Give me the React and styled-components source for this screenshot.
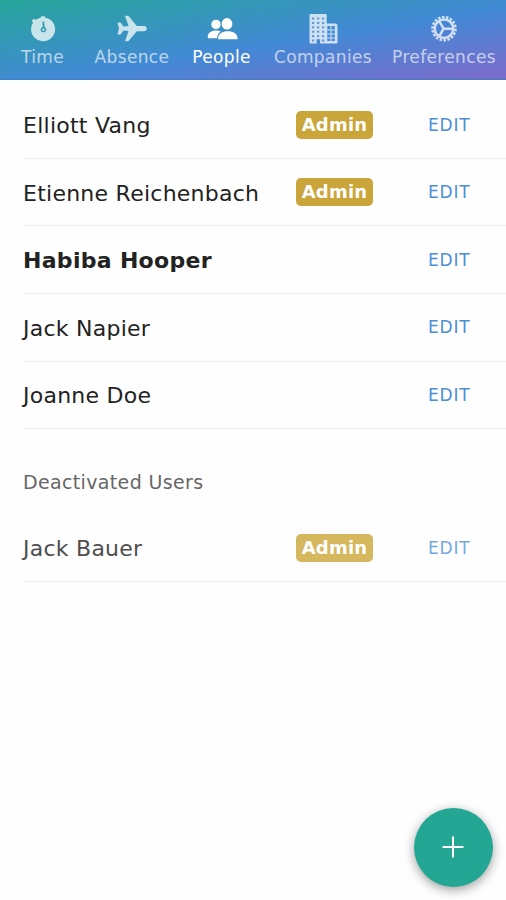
import React from 'react';
import styled, { createGlobalStyle } from 'styled-components';

const GlobalStyle = createGlobalStyle`
  * { box-sizing: border-box; }
  body {
    margin: 0;
    background: #fefefe;
    font-family: "DejaVu Sans", sans-serif;
    color: #222222;
  }
`;

const Page = styled.div`
  position: relative;
  height: 900px;
  overflow: hidden;
`;

const TabBar = styled.nav`
  display: grid;
  grid-template-columns: 85px 94px 85px 118px 124px;
  height: 79.5px;
  background: linear-gradient(to bottom right, #26a69a, #4289d5 55%, #7e6bcb);
  border-bottom: 1px solid #3f80cc;
`;

const Tab = styled.a`
  display: flex;
  flex-direction: column;
  align-items: center;
  padding-top: 12px;
  color: #fff;
  font-size: 17px;
  letter-spacing: 0.35px;
  line-height: 24px;
  white-space: nowrap;

  svg {
    display: block;
    width: 33px;
    height: 33px;
    margin-right: 1px;
    opacity: ${(p) => (p.$active ? 1 : 0.74)};
  }
`;

const TabLabel = styled.span`
  opacity: ${(p) => (p.$active ? 1 : 0.64)};
`;

const List = styled.ul`
  list-style: none;
  margin: 0;
  padding: ${(p) => p.$top}px 0 0 23px;
`;

const Row = styled.li`
  display: grid;
  grid-template-columns: 273px 132px 1fr;
  align-items: center;
  height: 67.6px;
  border-bottom: 1.5px solid #eeeeee;
`;

const Name = styled.span`
  font-size: 22px;
  letter-spacing: ${(p) => (p.$bold ? 0.3 : 0.25)}px;
  line-height: 28px;
  font-weight: ${(p) => (p.$bold ? 700 : 400)};
  padding-top: 3px;
  white-space: nowrap;
  opacity: ${(p) => (p.$inactive ? 0.8 : 1)};
`;

const Badge = styled.span`
  justify-self: start;
  width: 77px;
  height: 28px;
  margin-top: 0.5px;
  border-radius: 5px;
  background: ${(p) => (p.$inactive ? '#d5b75e' : '#c9a53a')};
  color: #fff;
  font-size: 18px;
  font-weight: 700;
  letter-spacing: 0.2px;
  line-height: 27px;
  text-align: center;
`;

const EditButton = styled.button`
  grid-column: 3;
  justify-self: start;
  padding: 0;
  border: 0;
  background: none;
  color: ${(p) => (p.$inactive ? '#76a8e0' : '#4d8ed4')};
  font: 17px/24px "DejaVu Sans", sans-serif;
  letter-spacing: 0.8px;
`;

const SectionTitle = styled.h2`
  margin: 0;
  padding: 40px 0 0 23px;
  font-size: 19px;
  letter-spacing: 0.35px;
  font-weight: 400;
  line-height: 26px;
  color: #666666;
`;

const AddButton = styled.button`
  position: absolute;
  right: 13px;
  bottom: 13px;
  display: grid;
  place-items: center;
  width: 79px;
  height: 79px;
  padding: 0 1px 1px 0;
  border: 0;
  border-radius: 50%;
  background: #23a694;
  box-shadow: 0 3px 11px rgba(0, 0, 0, 0.38);
`;

const TimeIcon = () => (
  <svg viewBox="0 0 33 33" fill="currentColor">
    <path
      fillRule="evenodd"
      d="M15.2 5.4V4.2h3.6v1.2A12 12 0 1 1 7.2 10.5L5.6 9 8 6.6l1.6 1.5a12 12 0 0 1 5.6-2.7ZM16.6 9.5v5.4a2.8 2.8 0 1 0 2 .1L18.2 9.5ZM17.4 16.5a1.2 1.2 0 1 1 0 2.4 1.2 1.2 0 0 1 0-2.4Z"
    />
  </svg>
);

const PlaneIcon = () => (
  <svg viewBox="0 0 33 33" fill="currentColor">
    <path d="M29 13.9c1.7 0 2.8 1.1 2.8 2.7s-1.1 2.7-2.8 2.7h-7.2L14 28.5c-.4.5-.8.7-1.4.7h-1.8c-.5 0-.7-.4-.5-.9l3.3-9.2-5-.5-2.8 3.5c-.3.4-.6.5-1 .5H3.2c-.5 0-.7-.3-.5-.8L4 16.6l-1.4-5.2c-.1-.5.1-.8.6-.8h1.6c.4 0 .7.1 1 .5l2.8 3.5 5-.5-3.3-9.4c-.2-.5 0-.9.5-.9h1.8c.6 0 1 .2 1.4.7l7.8 9.4Z" />
  </svg>
);

const PeopleIcon = () => (
  <svg viewBox="0 0 33 33" fill="currentColor">
    <circle cx="11" cy="12.4" r="4.7" />
    <ellipse cx="22" cy="11.8" rx="5.4" ry="5.8" />
    <path d="M2.8 26.2v-1.4c0-4 3.7-6.2 8.2-6.2 1.9 0 3.4.3 4.7 1-2.1 1.5-3.5 3.6-3.6 6.6Z" />
    <path d="M13.2 27.2v-1.1c0-4.5 4.3-6.9 9.6-6.9s9.7 2.4 9.7 6.9v1.1Z" />
  </svg>
);

const CompaniesIcon = () => (
  <svg viewBox="0 0 33 33">
    <path
      fill="currentColor"
      fillRule="evenodd"
      d="M4.8 2H19.4c.8 0 1.3.5 1.3 1.3v8.2h8.6c1.3 0 2.2.9 2.2 2.2v16.5c0 .8-.5 1.3-1.3 1.3H14.1v-4.3h-3.5v4.3H4.8c-.8 0-1.3-.5-1.3-1.3V3.3C3.5 2.5 4 2 4.8 2ZM21.3 14v15h7.5V14Z"
    />
    <g fill="#6a9cd8">
      {[5.6, 10, 14.4, 18.8, 23.2].map((y) =>
        [6, 11, 16].map((x) => <rect key={`${x}-${y}`} x={x} y={y} width="2.2" height="1.9" />)
      )}
      <path d="M6 27.4h2.2v2H6ZM16 27.4h2.2v2H16Z" />
    </g>
    <path d="M21.3 18h7.5M21.3 22h7.5M21.3 26h7.5M25 14v15" stroke="currentColor" strokeWidth="1.1" />
  </svg>
);

const CogIcon = () => (
  <svg viewBox="0 0 33 33" fill="none" stroke="currentColor">
    <path
      strokeWidth="2.5"
      d="M26.2 16.7a9.2 9.2 0 1 1-18.4 0 9.2 9.2 0 0 1 18.4 0ZM16.6 16.7H26M16.6 16.7l-4.4-7.6M16.6 16.7l-4.4 7.6"
      strokeLinejoin="round"
    />
    <circle cx="17" cy="16.7" r="11.4" strokeWidth="2.8" pathLength="72" strokeDasharray="2.5 1.5" />
  </svg>
);

const PlusIcon = () => (
  <svg width="22" height="22" viewBox="0 0 22 22" stroke="#fff" strokeWidth="2">
    <path d="M11 0.5V21.5M0.5 11H21.5" />
  </svg>
);

const tabs = [
  { label: 'Time', Icon: TimeIcon },
  { label: 'Absence', Icon: PlaneIcon },
  { label: 'People', Icon: PeopleIcon, active: true },
  { label: 'Companies', Icon: CompaniesIcon },
  { label: 'Preferences', Icon: CogIcon },
];

const users = [
  { name: 'Elliott Vang', admin: true },
  { name: 'Etienne Reichenbach', admin: true },
  { name: 'Habiba Hooper', current: true },
  { name: 'Jack Napier' },
  { name: 'Joanne Doe' },
];

const deactivated = [{ name: 'Jack Bauer', admin: true }];

function UserRow({ user, inactive }) {
  return (
    <Row>
      <Name $bold={user.current} $inactive={inactive}>{user.name}</Name>
      {user.admin && <Badge $inactive={inactive}>Admin</Badge>}
      <EditButton $inactive={inactive}>EDIT</EditButton>
    </Row>
  );
}

export default function App() {
  return (
    <Page>
      <GlobalStyle />
      <TabBar>
        {tabs.map(({ label, Icon, active }) => (
          <Tab key={label} $active={active}>
            <Icon />
            <TabLabel $active={active}>{label}</TabLabel>
          </Tab>
        ))}
      </TabBar>
      <List $top={11.8}>
        {users.map((u) => (
          <UserRow key={u.name} user={u} />
        ))}
      </List>
      <SectionTitle>Deactivated Users</SectionTitle>
      <List $top={19}>
        {deactivated.map((u) => (
          <UserRow key={u.name} user={u} inactive />
        ))}
      </List>
      <AddButton aria-label="Add user">
        <PlusIcon />
      </AddButton>
    </Page>
  );
}
